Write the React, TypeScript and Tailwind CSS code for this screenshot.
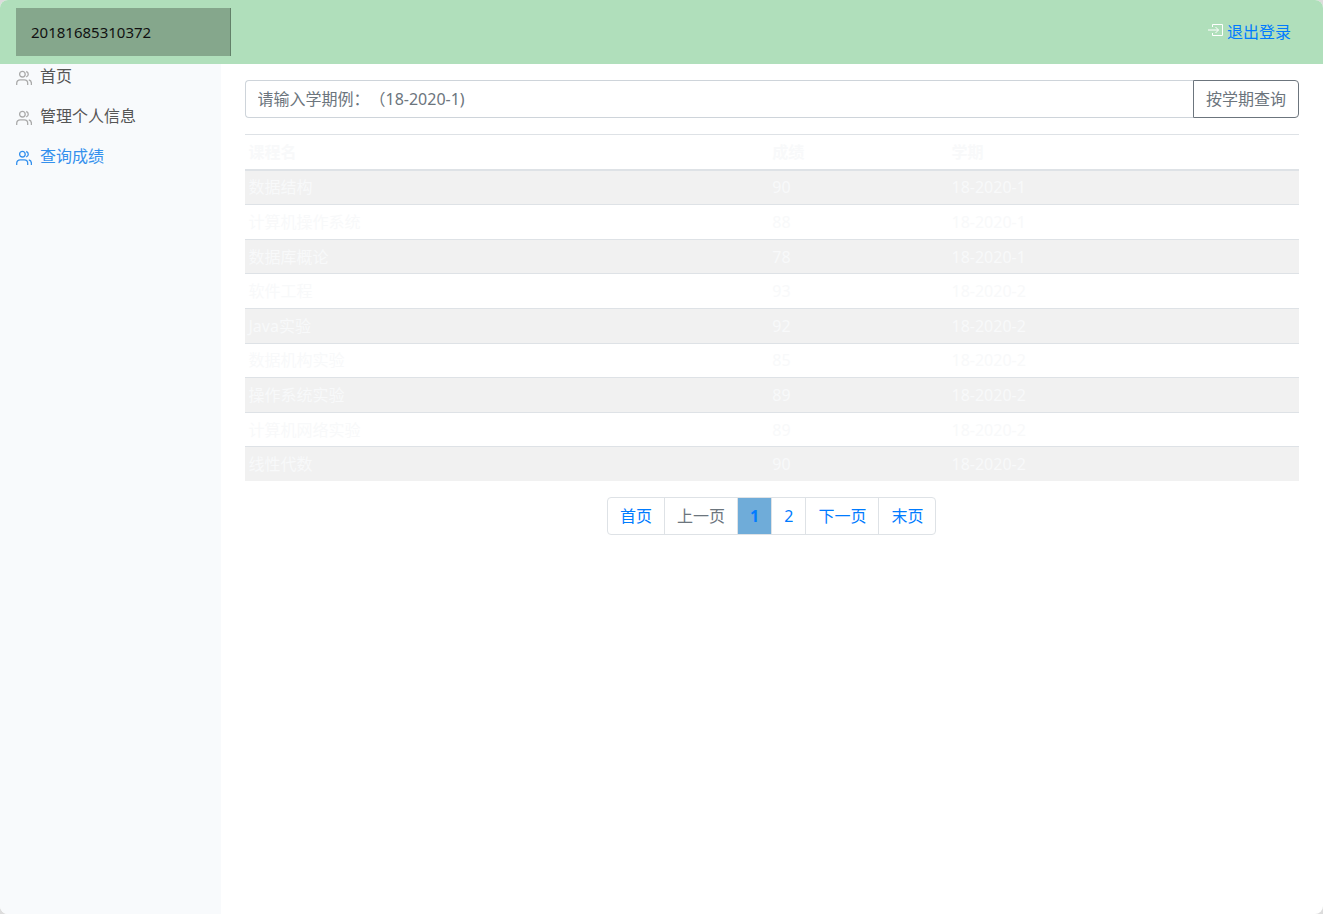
import { type ReactNode } from "react";

const navItems = [
  { label: "首页", active: false },
  { label: "管理个人信息", active: false },
  { label: "查询成绩", active: true },
];

const grades = [
  { course: "数据结构", score: 90, term: "18-2020-1" },
  { course: "计算机操作系统", score: 88, term: "18-2020-1" },
  { course: "数据库概论", score: 78, term: "18-2020-1" },
  { course: "软件工程", score: 93, term: "18-2020-2" },
  { course: "Java实验", score: 92, term: "18-2020-2" },
  { course: "数据机构实验", score: 85, term: "18-2020-2" },
  { course: "操作系统实验", score: 89, term: "18-2020-2" },
  { course: "计算机网络实验", score: 89, term: "18-2020-2" },
  { course: "线性代数", score: 90, term: "18-2020-2" },
];

const UsersIcon = ({ className }: { className: string }) => (
  <svg
    viewBox="0 0 16 16"
    className={className}
    fill="none"
    stroke="currentColor"
    strokeWidth="1.3"
    aria-hidden="true"
  >
    <circle cx="6.4" cy="4.2" r="2.8" />
    <path d="M0.7 15v-1.8a3.4 3.4 0 0 1 3.4-3.4h4.2a3.4 3.4 0 0 1 3.4 3.4V15" />
    <path d="M10.2 1.5a2.8 2.8 0 0 1 0 5.4" />
    <path d="M12.8 9.9a3.4 3.4 0 0 1 2.6 3.3V15" />
  </svg>
);

const LogoutIcon = () => (
  <svg
    viewBox="0 0 16 16"
    className="mb-1 h-4 w-4 text-white"
    fill="none"
    stroke="currentColor"
    strokeWidth="1"
    aria-hidden="true"
  >
    <path d="M5.5 5V2.5h10v11h-10V11" />
    <path d="M1 8h10.5M8.5 5l3 3-3 3" />
  </svg>
);

const Header = () => (
  <header className="flex h-16 items-center justify-between bg-[#b0dfbb] px-4">
    <a
      href="#"
      className="flex h-12 w-[215px] items-center border-r border-[#638069] bg-[#85a78c] px-[15px] text-[15px] text-[#111]"
    >
      20181685310372
    </a>
    <div className="flex items-center gap-1 px-4">
      <LogoutIcon />
      <a href="#" className="text-[#007bff]">
        退出登录
      </a>
    </div>
  </header>
);

const Sidebar = () => (
  <nav className="w-1/6 shrink-0 bg-[#f8fafc]">
    <ul className="space-y-4">
      {navItems.map((item) => (
        <li key={item.label}>
          <a
            href="#"
            className={
              item.active
                ? "flex h-6 items-center gap-2 px-4 text-[#3490ed]"
                : "flex h-6 items-center gap-2 px-4 text-[#555]"
            }
          >
            <UsersIcon
              className={
                item.active
                  ? "mt-1 h-4 w-4 text-[#3490ed]"
                  : "mt-1 h-4 w-4 text-[#aaa]"
              }
            />
            {item.label}
          </a>
        </li>
      ))}
    </ul>
  </nav>
);

const PageButton = ({
  children,
  active,
  disabled,
}: {
  children: ReactNode;
  active?: boolean;
  disabled?: boolean;
}) => {
  if (active) {
    return (
      <button className="h-9 bg-[#6facd9] px-3 font-bold text-[#007bff]">
        {children}
      </button>
    );
  }
  return (
    <button
      disabled={disabled}
      className="h-9 px-3 text-[#007bff] disabled:text-[#6c757d]"
    >
      {children}
    </button>
  );
};

const App = () => {
  return (
    <div className="bg-[#dcdcdc]">
      <div className="flex min-h-screen flex-col overflow-hidden rounded-lg bg-white font-['Noto_Sans','Noto_Sans_CJK_SC',sans-serif] text-base">
        <Header />
        <div className="flex flex-1">
          <Sidebar />
          <main className="flex-1 px-6 pt-4">
            <form className="flex" onSubmit={(e) => e.preventDefault()}>
              <input
                type="text"
                aria-label="学期"
                placeholder="请输入学期例：（18-2020-1)"
                className="h-[38px] min-w-0 flex-1 rounded-l border border-r-0 border-[#ced4da] px-3 [text-spacing-trim:space-all] placeholder:text-[#6c757d]"
              />
              <button
                type="submit"
                className="h-[38px] rounded-r border border-[#6c757d] px-3 text-[#6c757d]"
              >
                按学期查询
              </button>
            </form>

            <table className="mt-4 h-[347px] w-full text-left leading-6 text-[#f8f9fa]">
              <thead>
                <tr className="h-[35px] border-t border-b-2 border-[#dee2e6]">
                  <th className="p-1">课程名</th>
                  <th className="w-[17%] p-1">成绩</th>
                  <th className="w-1/3 p-1">学期</th>
                </tr>
              </thead>
              <tbody>
                {grades.map((grade) => (
                  <tr
                    key={grade.course}
                    className="border-t border-[#dee2e6] odd:bg-[#f1f1f1]"
                  >
                    <td className="p-1">{grade.course}</td>
                    <td className="p-1">{grade.score}</td>
                    <td className="p-1">{grade.term}</td>
                  </tr>
                ))}
              </tbody>
            </table>

            <nav className="mt-4 flex justify-center">
              <div className="flex divide-x divide-[#dee2e6] rounded border border-[#dee2e6]">
                <PageButton>首页</PageButton>
                <PageButton disabled>上一页</PageButton>
                <PageButton active>1</PageButton>
                <PageButton>2</PageButton>
                <PageButton>下一页</PageButton>
                <PageButton>末页</PageButton>
              </div>
            </nav>
          </main>
        </div>
      </div>
    </div>
  );
};

export default App;
